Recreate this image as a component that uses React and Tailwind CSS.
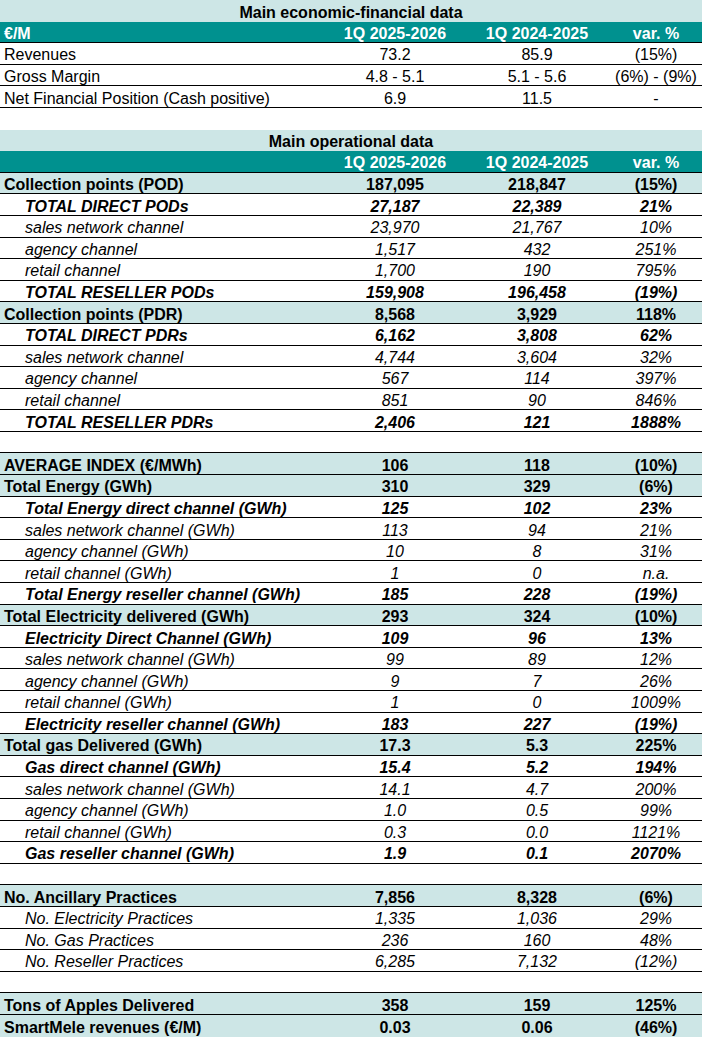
const ROWS = [
  { t: 'title', label: 'Main economic-financial data' },
  { t: 'head', label: '€/M' },
  { t: 'plain', label: 'Revenues', v: ['73.2', '85.9', '(15%)'] },
  { t: 'plain', label: 'Gross Margin', v: ['4.8 - 5.1', '5.1 - 5.6', '(6%) - (9%)'] },
  { t: 'plain', label: 'Net Financial Position (Cash positive)', v: ['6.9', '11.5', '-'] },
  { t: 'blank' },
  { t: 'title', label: 'Main operational data' },
  { t: 'head', label: '' },
  { t: 'main', label: 'Collection points (POD)', v: ['187,095', '218,847', '(15%)'] },
  { t: 'sub', label: 'TOTAL DIRECT PODs', v: ['27,187', '22,389', '21%'] },
  { t: 'item', label: 'sales network channel', v: ['23,970', '21,767', '10%'] },
  { t: 'item', label: 'agency channel', v: ['1,517', '432', '251%'] },
  { t: 'item', label: 'retail channel', v: ['1,700', '190', '795%'] },
  { t: 'sub', label: 'TOTAL RESELLER PODs', v: ['159,908', '196,458', '(19%)'] },
  { t: 'main', label: 'Collection points (PDR)', v: ['8,568', '3,929', '118%'] },
  { t: 'sub', label: 'TOTAL DIRECT PDRs', v: ['6,162', '3,808', '62%'] },
  { t: 'item', label: 'sales network channel', v: ['4,744', '3,604', '32%'] },
  { t: 'item', label: 'agency channel', v: ['567', '114', '397%'] },
  { t: 'item', label: 'retail channel', v: ['851', '90', '846%'] },
  { t: 'sub', label: 'TOTAL RESELLER PDRs', v: ['2,406', '121', '1888%'] },
  { t: 'blank', line: true },
  { t: 'main', label: 'AVERAGE INDEX (€/MWh)', v: ['106', '118', '(10%)'] },
  { t: 'main', label: 'Total Energy (GWh)', v: ['310', '329', '(6%)'] },
  { t: 'sub', label: 'Total Energy direct channel (GWh)', v: ['125', '102', '23%'] },
  { t: 'item', label: 'sales network channel (GWh)', v: ['113', '94', '21%'] },
  { t: 'item', label: 'agency channel (GWh)', v: ['10', '8', '31%'] },
  { t: 'item', label: 'retail channel (GWh)', v: ['1', '0', 'n.a.'] },
  { t: 'sub', label: 'Total Energy reseller channel (GWh)', v: ['185', '228', '(19%)'] },
  { t: 'main', label: 'Total Electricity delivered (GWh)', v: ['293', '324', '(10%)'] },
  { t: 'sub', label: 'Electricity Direct Channel (GWh)', v: ['109', '96', '13%'] },
  { t: 'item', label: 'sales network channel (GWh)', v: ['99', '89', '12%'] },
  { t: 'item', label: 'agency channel (GWh)', v: ['9', '7', '26%'] },
  { t: 'item', label: 'retail channel (GWh)', v: ['1', '0', '1009%'] },
  { t: 'sub', label: 'Electricity reseller channel (GWh)', v: ['183', '227', '(19%)'] },
  { t: 'main', label: 'Total gas Delivered (GWh)', v: ['17.3', '5.3', '225%'] },
  { t: 'sub', label: 'Gas direct channel (GWh)', v: ['15.4', '5.2', '194%'] },
  { t: 'item', label: 'sales network channel (GWh)', v: ['14.1', '4.7', '200%'] },
  { t: 'item', label: 'agency channel (GWh)', v: ['1.0', '0.5', '99%'] },
  { t: 'item', label: 'retail channel (GWh)', v: ['0.3', '0.0', '1121%'] },
  { t: 'sub', label: 'Gas reseller channel (GWh)', v: ['1.9', '0.1', '2070%'] },
  { t: 'blank', line: true },
  { t: 'main', label: 'No. Ancillary Practices', v: ['7,856', '8,328', '(6%)'] },
  { t: 'item', label: 'No. Electricity Practices', v: ['1,335', '1,036', '29%'] },
  { t: 'item', label: 'No. Gas Practices', v: ['236', '160', '48%'] },
  { t: 'item', label: 'No. Reseller Practices', v: ['6,285', '7,132', '(12%)'] },
  { t: 'blank', line: true },
  { t: 'main', label: 'Tons of Apples Delivered', v: ['358', '159', '125%'] },
  { t: 'main', label: 'SmartMele revenues (€/M)', v: ['0.03', '0.06', '(46%)'], last: true },
]

const rowStyle = {
  plain: 'bg-white border-b border-black',
  main: 'bg-[#cde6e6] font-bold border-b border-black',
  sub: 'bg-white font-bold italic border-b border-black',
  item: 'bg-white italic border-b border-black',
}

function Cells({ row }) {
  const indent = row.t === 'sub' || row.t === 'item' ? 'pl-[25px]' : 'pl-[4px]'
  return (
    <>
      <div className={`w-[326px] shrink-0 whitespace-nowrap ${indent}`}>{row.label}</div>
      <div className="w-[138px] shrink-0 text-center">{row.v[0]}</div>
      <div className="w-[146px] shrink-0 text-center">{row.v[1]}</div>
      <div className="w-[92px] shrink-0 text-center">{row.v[2]}</div>
    </>
  )
}

function Row({ row }) {
  const base = 'h-[21.6px] flex items-center leading-none pt-[4px]'
  if (row.t === 'blank') {
    return <div className={`${base} ${row.line ? 'border-b border-black' : ''}`} />
  }
  if (row.t === 'title') {
    return <div className={`${base} justify-center bg-[#cde6e6] font-bold`}>{row.label}</div>
  }
  if (row.t === 'head') {
    return (
      <div className={`${base} bg-[#00918f] text-white font-bold border-b border-black`}>
        <Cells row={{ t: 'head', label: row.label, v: ['1Q 2025-2026', '1Q 2024-2025', 'var. %'] }} />
      </div>
    )
  }
  const cls = row.last ? rowStyle[row.t].replace('border-b border-black', '') : rowStyle[row.t]
  return (
    <div className={`${base} ${cls}`}>
      <Cells row={row} />
    </div>
  )
}

export default function App() {
  return (
    <div className="w-[704px] h-[1037px] bg-white overflow-hidden text-black text-[16px] font-['Liberation_Sans',Arial,sans-serif]">
      <div className="w-[702px]">
        {ROWS.map((r, i) => <Row key={i} row={r} />)}
      </div>
    </div>
  )
}
